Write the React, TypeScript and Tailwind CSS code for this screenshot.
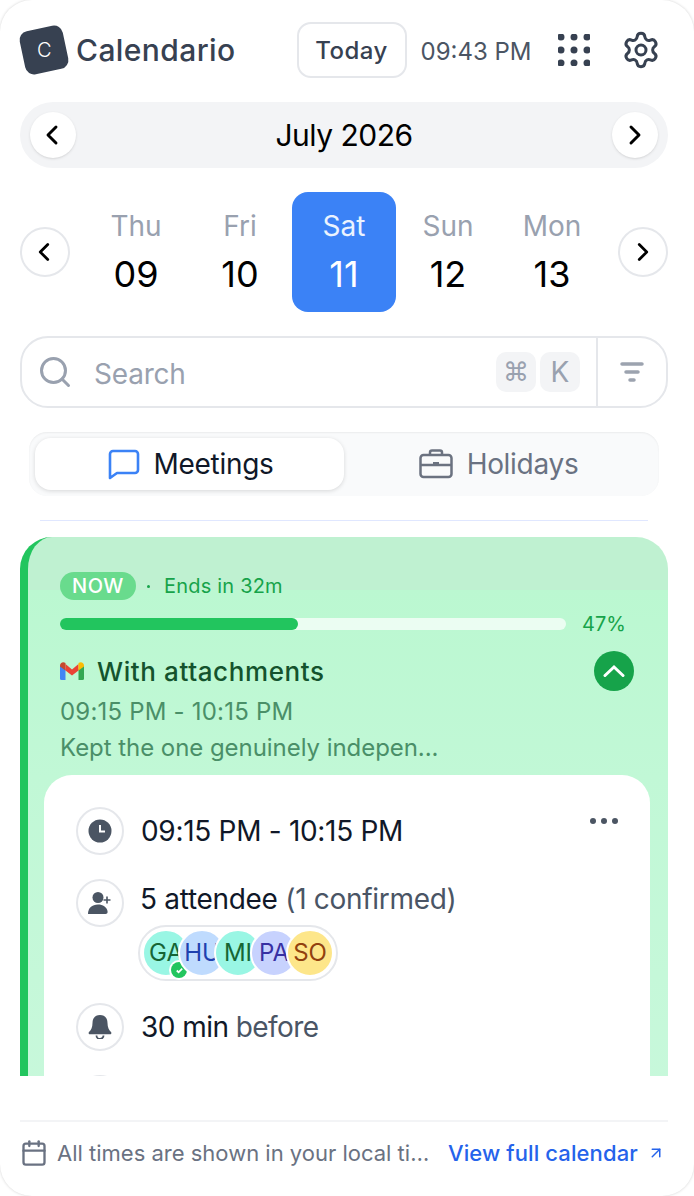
import { ArrowUpRight, Calendar, ChevronLeft, ChevronRight, Search, Settings } from "lucide-react";

const days = [
  { name: "Thu", num: "09" },
  { name: "Fri", num: "10" },
  { name: "Sat", num: "11", active: true },
  { name: "Sun", num: "12" },
  { name: "Mon", num: "13" },
];

const people = [
  { label: "GA", cls: "bg-[#99f6e4] text-[#166534]", ok: true },
  { label: "HU", cls: "bg-[#bfdbfe] text-[#1e40af]" },
  { label: "MI", cls: "bg-[#99f6e4] text-[#166534]" },
  { label: "PA", cls: "bg-[#c7d2fe] text-[#3730a3]" },
  { label: "SO", cls: "bg-[#fde68a] text-[#92400e]" },
];

const GmailIcon = () => (
  <svg width="24" height="18" viewBox="0 0 24 18">
    <path d="M0 3.5V16.5A1.5 1.5 0 0 0 1.5 18H5.5V7Z" fill="#4285f4" />
    <path d="M24 3.5V16.5A1.5 1.5 0 0 1 22.5 18H18.5V7Z" fill="#34a853" />
    <path d="M5.5 2 12 7.5 18.5 2V8.5L12 13.5 5.5 8.5Z" fill="#ea4335" />
    <path d="M0 3.5C0 .8 3 -.8 5.5 1V8.5L0 4.5Z" fill="#c5492f" />
    <path d="M24 3.5C24 .8 21 -.8 18.5 1V8.5L24 4.5Z" fill="#fbbc04" />
  </svg>
);

const ClockIcon = () => (
  <svg width="24" height="24" viewBox="0 0 24 24">
    <circle cx="12" cy="12" r="11.5" fill="#4b5563" />
    <path d="M12 6v6.5h5" fill="none" stroke="#fff" strokeWidth="2" />
  </svg>
);

const UserPlusIcon = () => (
  <svg width="24" height="24" viewBox="0 0 24 24" fill="#4b5563">
    <circle cx="10" cy="6.5" r="5.5" />
    <path d="M0 23c0-6 4-9.5 10-9.5 5 0 8.500 2.500 9.500 6.500.500 2-.500 3-2 3Z" />
    <path d="M19 5.500v7M15.500 9h7" stroke="#4b5563" strokeWidth="1.600" fill="none" />
  </svg>
);

const BellIcon = () => (
  <svg width="24" height="24" viewBox="0 0 24 24" fill="#4b5563">
    <path d="M12 0C7 0 4.500 3.500 4.500 8c0 4.500-1.500 7-3.500 9-.800.800-.300 2.200 1 2.200h20c1.300 0 1.800-1.400 1-2.200-2-2-3.500-4.500-3.500-9 0-4.500-2.500-8-7.500-8Z" />
    <path d="M8.500 20.500a3.500 3.500 0 0 0 7 0" fill="none" stroke="#4b5563" strokeWidth="1.800" />
  </svg>
);

export default function App() {
  return (
    <div className="w-[694px] h-[1196px] bg-white rounded-[32px] shadow-[0_0_3px_rgba(0,0,0,0.18)] flex flex-col pl-5 pr-[26px] pt-[22px] font-['Inter',sans-serif] overflow-hidden">
      {/* header */}
      <div className="flex items-center h-14 shrink-0">
        <div className="w-11 h-11 rounded-[9px] bg-[#374151] -rotate-12 flex items-center justify-center ml-[2px] text-white text-xl font-light">
          <span className="rotate-12">C</span>
        </div>
        <span className="ml-[10px] text-[30px] font-medium text-[#374151] tracking-[0.4px]">Calendario</span>
        <button className="ml-[61px] w-[110px] h-14 rounded-[14px] border-2 border-gray-200 text-2xl font-medium text-[#374151] tracking-[0.5px] pt-[2px]">Today</button>
        <span className="ml-[14px] text-2xl text-[#4b5563] pt-[3px]">09:43 PM</span>
        <svg className="ml-[26px]" width="32" height="32" viewBox="0 0 32 32" fill="#374151">
          {[3, 16, 29].map((y) =>
            [3, 16, 29].map((x) => <circle key={`${x}-${y}`} cx={x} cy={y} r="3.500" />)
          )}
        </svg>
        <Settings className="ml-[31px] text-[#374151]" size={40} strokeWidth={1.8} />
      </div>

      {/* month */}
      <div className="mt-6 h-[66px] shrink-0 rounded-full bg-gray-100 flex items-center justify-between px-[10px]">
        <button className="w-[46px] h-[46px] rounded-full bg-white shadow-sm flex items-center justify-center">
          <ChevronLeft size={32} strokeWidth={2.2} className="text-black -ml-[2px]" />
        </button>
        <span className="text-[30px] font-normal text-black tracking-[-0.5px]">July 2026</span>
        <button className="w-[46px] h-[46px] rounded-full bg-white shadow-sm flex items-center justify-center">
          <ChevronRight size={32} strokeWidth={2.2} className="text-black" />
        </button>
      </div>

      {/* days */}
      <div className="mt-6 h-[120px] shrink-0 flex items-center">
        <button className="w-[50px] h-[50px] rounded-full border-2 border-gray-200 flex items-center justify-center">
          <ChevronLeft size={30} strokeWidth={2.2} className="text-black -ml-[2px]" />
        </button>
        <div className="flex ml-[14px]">
          {days.map((d) => (
            <div
              key={d.name}
              className={`w-[104px] h-[120px] rounded-2xl flex flex-col items-center justify-center gap-[8px] pb-1 ${d.active ? "bg-[#3b82f6]" : ""}`}
            >
              <span className={`text-[28px] leading-[40px] ${d.active ? "text-white/90" : "text-gray-400"}`}>{d.name}</span>
              <span className={`text-[36px] leading-[40px] font-normal ${d.active ? "text-white" : "text-black"}`}>{d.num}</span>
            </div>
          ))}
        </div>
        <button className="ml-[14px] w-[50px] h-[50px] rounded-full border-2 border-gray-200 flex items-center justify-center">
          <ChevronRight size={30} strokeWidth={2.2} className="text-black" />
        </button>
      </div>

      {/* search */}
      <div className="mt-6 h-[72px] shrink-0 rounded-[28px] border-2 border-gray-200 flex items-center">
        <Search className="ml-[15px] text-gray-400" size={36} strokeWidth={2} />
        <span className="ml-[21px] text-[28px] text-gray-400 flex-1 pt-1 tracking-[-0.2px]">Search</span>
        <span className="w-10 h-10 rounded-[10px] bg-gray-100 text-gray-400 flex items-center justify-center text-[26px] font-['DejaVu_Sans',sans-serif]">⌘</span>
        <span className="ml-1 w-10 h-10 rounded-[10px] bg-gray-100 text-gray-400 flex items-center justify-center text-[28px]">K</span>
        <div className="ml-4 w-[2px] h-full bg-gray-200" />
        <div className="w-[68px] flex justify-center">
          <svg width="24" height="20" viewBox="0 0 24 20" fill="none" stroke="#9ca3af" strokeWidth="3.500" strokeLinecap="round">
            <path d="M2 2h20M6 10h12M10 18h4" />
          </svg>
        </div>
      </div>

      {/* tabs */}
      <div className="mt-6 mx-[9px] h-16 shrink-0 rounded-[18px] bg-gray-50 shadow-[inset_0_1px_2px_rgba(0,0,0,0.06)] flex items-center p-[6px]">
        <div className="w-[309px] h-[52px] rounded-2xl bg-white shadow-[0_1px_4px_rgba(0,0,0,0.14)] flex items-center justify-center gap-[14px] pl-[2px]">
          <svg width="32" height="32" viewBox="0 0 32 32" fill="none" stroke="#3b82f6" strokeWidth="2.600" strokeLinejoin="round">
            <path d="M2 6a3 3 0 0 1 3-3h22a3 3 0 0 1 3 3v16a3 3 0 0 1-3 3H9l-7 5Z" />
          </svg>
          <span className="text-[28px] font-normal text-gray-900 tracking-[-0.3px]">Meetings</span>
        </div>
        <div className="flex-1 flex items-center justify-center gap-[14px]">
          <svg width="34" height="30" viewBox="0 0 34 30" fill="none" stroke="#6b7280" strokeWidth="2.500" strokeLinejoin="round">
            <rect x="1.500" y="6" width="31" height="22" rx="3" />
            <path d="M11 6V3.500A2 2 0 0 1 13 1.500h8a2 2 0 0 1 2 2V6M1.500 16h31" />
            <path d="M14 15h6" strokeWidth="4" />
          </svg>
          <span className="text-[28px] text-gray-500 tracking-[-0.3px]">Holidays</span>
        </div>
      </div>

      <div className="mt-6 mx-5 h-[1px] shrink-0 bg-[#e0e7ff]" />

      <div className="mt-4 h-[539px] shrink-0 overflow-hidden">
        <div className="rounded-[32px] border-l-8 border-[#22c55e] bg-[linear-gradient(#bff1d1_53px,#bbf8d1_53px,#c1f8d6_240px,#c9f8dc_100%)] pt-[35px] pl-4 pr-[18px]">
          <div className="pl-4 pr-[24px]">
            <div className="flex items-center h-7">
              <span className="w-[76px] h-7 rounded-full bg-[#69db8d] text-white text-xl font-medium tracking-[0.5px] flex items-center justify-center">NOW</span>
              <span className="ml-[11px] w-[3px] h-[3px] rounded-full bg-[#16a34a]" />
              <span className="ml-[14px] text-xl text-[#16a34a] tracking-[0.2px]">Ends in 32m</span>
            </div>
            <div className="mt-[18px] flex items-center h-3">
              <div className="w-[506px] h-3 rounded-full bg-white/70">
                <div className="h-full w-[47%] rounded-full bg-[#22c55e]" />
              </div>
              <span className="ml-4 text-xl text-[#16a34a]">47%</span>
            </div>
            <div className="mt-[21px] flex items-center h-10">
              <GmailIcon />
              <span className="ml-[13px] text-[26px] font-medium text-[#14532d] flex-1 tracking-[0.6px]">With attachments</span>
              <span className="-mr-[8px] w-10 h-10 rounded-full bg-[#16a34a] flex items-center justify-center">
                <svg width="22" height="14" viewBox="0 0 22 14" fill="none" stroke="#fff" strokeWidth="3" strokeLinecap="round">
                  <path d="M2 11.500 11 3l9 8.500" />
                </svg>
              </span>
            </div>
            <div className="mt-[5px] text-2xl leading-[32px] text-[#4a8f68] tracking-[0.2px]">09:15 PM - 10:15 PM</div>
            <div className="mt-1 text-2xl leading-[32px] text-[#4a8f68] tracking-[-0.05px]">Kept the one genuinely indepen...</div>
          </div>

          <div className="mt-[11px] h-[400px] rounded-t-[28px] bg-white pl-8 pr-8 pt-8 relative">
            <svg className="absolute right-[32px] top-[43px]" width="28" height="6" viewBox="0 0 28 6" fill="#4b5563">
              <circle cx="3" cy="3" r="3" />
              <circle cx="14" cy="3" r="3" />
              <circle cx="25" cy="3" r="3" />
            </svg>
            <div className="flex items-center gap-[17px] h-12">
              <span className="w-12 h-12 rounded-full border-2 border-gray-200 flex items-center justify-center"><ClockIcon /></span>
              <span className="text-[28px] font-normal text-gray-900 tracking-[-0.3px]">09:15 PM - 10:15 PM</span>
            </div>
            <div className="mt-6 flex gap-[17px]">
              <span className="w-12 h-12 rounded-full border-2 border-gray-200 flex items-center justify-center"><UserPlusIcon /></span>
              <div className="mt-[0px] -ml-[1px]">
                <div className="text-[28px] leading-[40px] text-gray-900 tracking-[-0.3px]">
                  5 attendee <span className="text-gray-600">(1 confirmed)</span>
                </div>
                <div className="-ml-[2px] mt-[6px] w-[200px] h-14 rounded-full border-2 border-gray-200 flex items-center pl-[2px]">
                  {people.map((p, i) => (
                    <span
                      key={p.label}
                      className={`relative w-12 h-12 shrink-0 rounded-full border-2 border-white text-2xl flex items-center justify-center overflow-visible ${i > 0 ? "-ml-3" : ""} ${p.cls}`}
                      style={{ zIndex: i }}
                    >
                      {p.label}
                      {p.ok && (
                        <span className="absolute right-[1px] bottom-[-3px] w-4 h-4 rounded-full bg-[#22c55e] ring-2 ring-white flex items-center justify-center">
                          <svg width="9" height="9" viewBox="0 0 10 10" fill="none" stroke="#fff" strokeWidth="2"><path d="M2 5l2 2 4-4" /></svg>
                        </span>
                      )}
                    </span>
                  ))}
                </div>
              </div>
            </div>
            <div className="mt-[22px] flex items-center gap-[17px] h-12">
              <span className="w-12 h-12 rounded-full border-2 border-gray-200 flex items-center justify-center"><BellIcon /></span>
              <span className="text-[28px] text-gray-900 tracking-[-0.55px]">30 min <span className="text-gray-600">before</span></span>
            </div>
            <div className="mt-6 w-12 h-12 rounded-full border-2 border-gray-200" />
          </div>
        </div>
      </div>

      {/* footer */}
      <div className="mt-11 h-[2px] shrink-0 bg-gray-100" />
      <div className="mt-[15px] flex items-center h-8">
        <Calendar className="text-gray-500 shrink-0" size={28} strokeWidth={2} />
        <span className="ml-[9px] text-[22px] text-gray-500 w-[374px] truncate">All times are shown in your local timezone settings</span>
        <span className="ml-[17px] text-[22px] font-medium text-[#2563eb] whitespace-nowrap tracking-[0.1px]">View full calendar</span>
        <ArrowUpRight className="ml-[9px] text-[#2563eb]" size={18} strokeWidth={2} />
      </div>
    </div>
  );
}
